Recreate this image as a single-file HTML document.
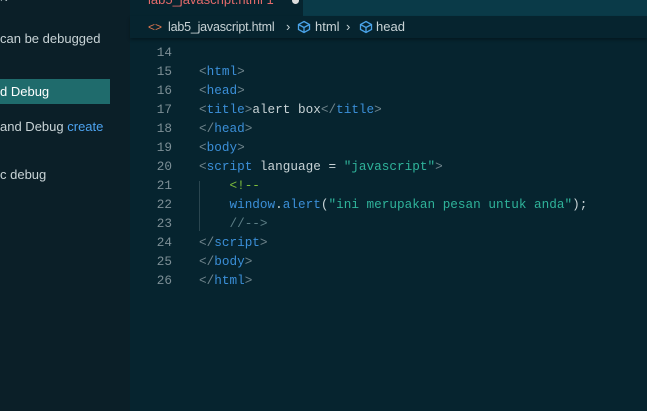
<!DOCTYPE html>
<html><head><style>
body{margin:0;width:647px;height:411px;overflow:hidden;background:#06242f;font-family:"Liberation Sans",sans-serif;position:relative}
.sb{position:absolute;left:0;top:0;width:130px;height:411px;background:#0b1f28}
.sb div{position:absolute;left:0;font-size:13px;color:#c8d3d6;white-space:nowrap}
.tabs{position:absolute;left:130px;top:0;right:0;height:16px;background:#0a3a48}
.tab{position:absolute;left:130px;top:0;width:173px;height:16px;background:#06242f;color:#e26a6a;font-size:13px}
.bc{position:absolute;left:130px;top:16px;right:0;height:22px;background:#06242f;box-shadow:0 2px 3px rgba(0,0,0,.3);font-size:13px;color:#c8d3d6;line-height:22px}
.bc span{position:absolute;white-space:nowrap}
.bc svg{position:absolute;top:4px}
.code{position:absolute;left:130px;top:43px;font-family:"Liberation Mono",monospace;font-size:12.7px;line-height:19px;color:#c8d3d6}
.ln{position:absolute;left:0;width:42px;text-align:right;color:#7d8f96}
.l{position:absolute;left:69px;white-space:pre}
.t{color:#3b8fd8}.p{color:#6f848c}.s{color:#2fb39a}.c{color:#5c7e86}.g{color:#7ebd3b}
.guide{position:absolute;left:199px;top:181px;width:1px;height:50px;background:#2a4650}
</style></head><body>
<div class="sb">
<div style="top:-8px;color:#9fb0b5;font-size:11px">N</div>
<div style="top:31px">can be debugged</div>
<div style="top:79px;width:110px;height:25px;background:#1f6b6c;line-height:25px;color:#fff">d Debug</div>
<div style="top:119px">and Debug <span style="color:#4da3f0">create</span></div>
<div style="top:167px">c debug</div>
</div>
<div class="tabs"></div>
<div class="tab"><span style="position:absolute;left:18px;top:-8px">lab5_javascript.html 1</span><span style="position:absolute;left:162px;top:-3px;width:7px;height:7px;border-radius:50%;background:#ddd"></span></div>
<div class="bc">
<span style="left:18px;color:#e0774f;font-size:12px">&lt;&gt;</span>
<span style="left:38px;width:113px;font-size:12.5px;letter-spacing:-0.2px">lab5_javascript.html</span>
<span style="left:156px">›</span>
<svg style="left:167px" width="14" height="14" viewBox="0 0 14 14" fill="none" stroke="#4aa3e8" stroke-width="1.3"><path d="M7 1.5 12.5 4.5v5L7 12.5 1.5 9.5v-5z M1.5 4.5 7 7.5 12.5 4.5 M7 7.5v5"/></svg>
<span style="left:185px">html</span>
<span style="left:216px">›</span>
<svg style="left:229px" width="14" height="14" viewBox="0 0 14 14" fill="none" stroke="#4aa3e8" stroke-width="1.3"><path d="M7 1.5 12.5 4.5v5L7 12.5 1.5 9.5v-5z M1.5 4.5 7 7.5 12.5 4.5 M7 7.5v5"/></svg>
<span style="left:246px">head</span>
</div>
<div class="guide"></div>
<div class="code">
<div class="ln" style="top:0">14</div>
<div class="ln" style="top:19px">15</div><div class="l" style="top:19px"><span class="p">&lt;</span><span class="t">html</span><span class="p">&gt;</span></div>
<div class="ln" style="top:38px">16</div><div class="l" style="top:38px"><span class="p">&lt;</span><span class="t">head</span><span class="p">&gt;</span></div>
<div class="ln" style="top:57px">17</div><div class="l" style="top:57px"><span class="p">&lt;</span><span class="t">title</span><span class="p">&gt;</span>alert box<span class="p">&lt;/</span><span class="t">title</span><span class="p">&gt;</span></div>
<div class="ln" style="top:76px">18</div><div class="l" style="top:76px"><span class="p">&lt;/</span><span class="t">head</span><span class="p">&gt;</span></div>
<div class="ln" style="top:95px">19</div><div class="l" style="top:95px"><span class="p">&lt;</span><span class="t">body</span><span class="p">&gt;</span></div>
<div class="ln" style="top:114px">20</div><div class="l" style="top:114px"><span class="p">&lt;</span><span class="t">script</span> language = <span class="s">"javascript"</span><span class="p">&gt;</span></div>
<div class="ln" style="top:133px">21</div><div class="l" style="top:133px">    <span class="g">&lt;!--</span></div>
<div class="ln" style="top:152px">22</div><div class="l" style="top:152px">    <span class="t">window</span>.<span class="t">alert</span>(<span class="s">"ini merupakan pesan untuk anda"</span>);</div>
<div class="ln" style="top:171px">23</div><div class="l" style="top:171px">    <span class="c">//--&gt;</span></div>
<div class="ln" style="top:190px">24</div><div class="l" style="top:190px"><span class="p">&lt;/</span><span class="t">script</span><span class="p">&gt;</span></div>
<div class="ln" style="top:209px">25</div><div class="l" style="top:209px"><span class="p">&lt;/</span><span class="t">body</span><span class="p">&gt;</span></div>
<div class="ln" style="top:228px">26</div><div class="l" style="top:228px"><span class="p">&lt;/</span><span class="t">html</span><span class="p">&gt;</span></div>
</div>
</body></html>
